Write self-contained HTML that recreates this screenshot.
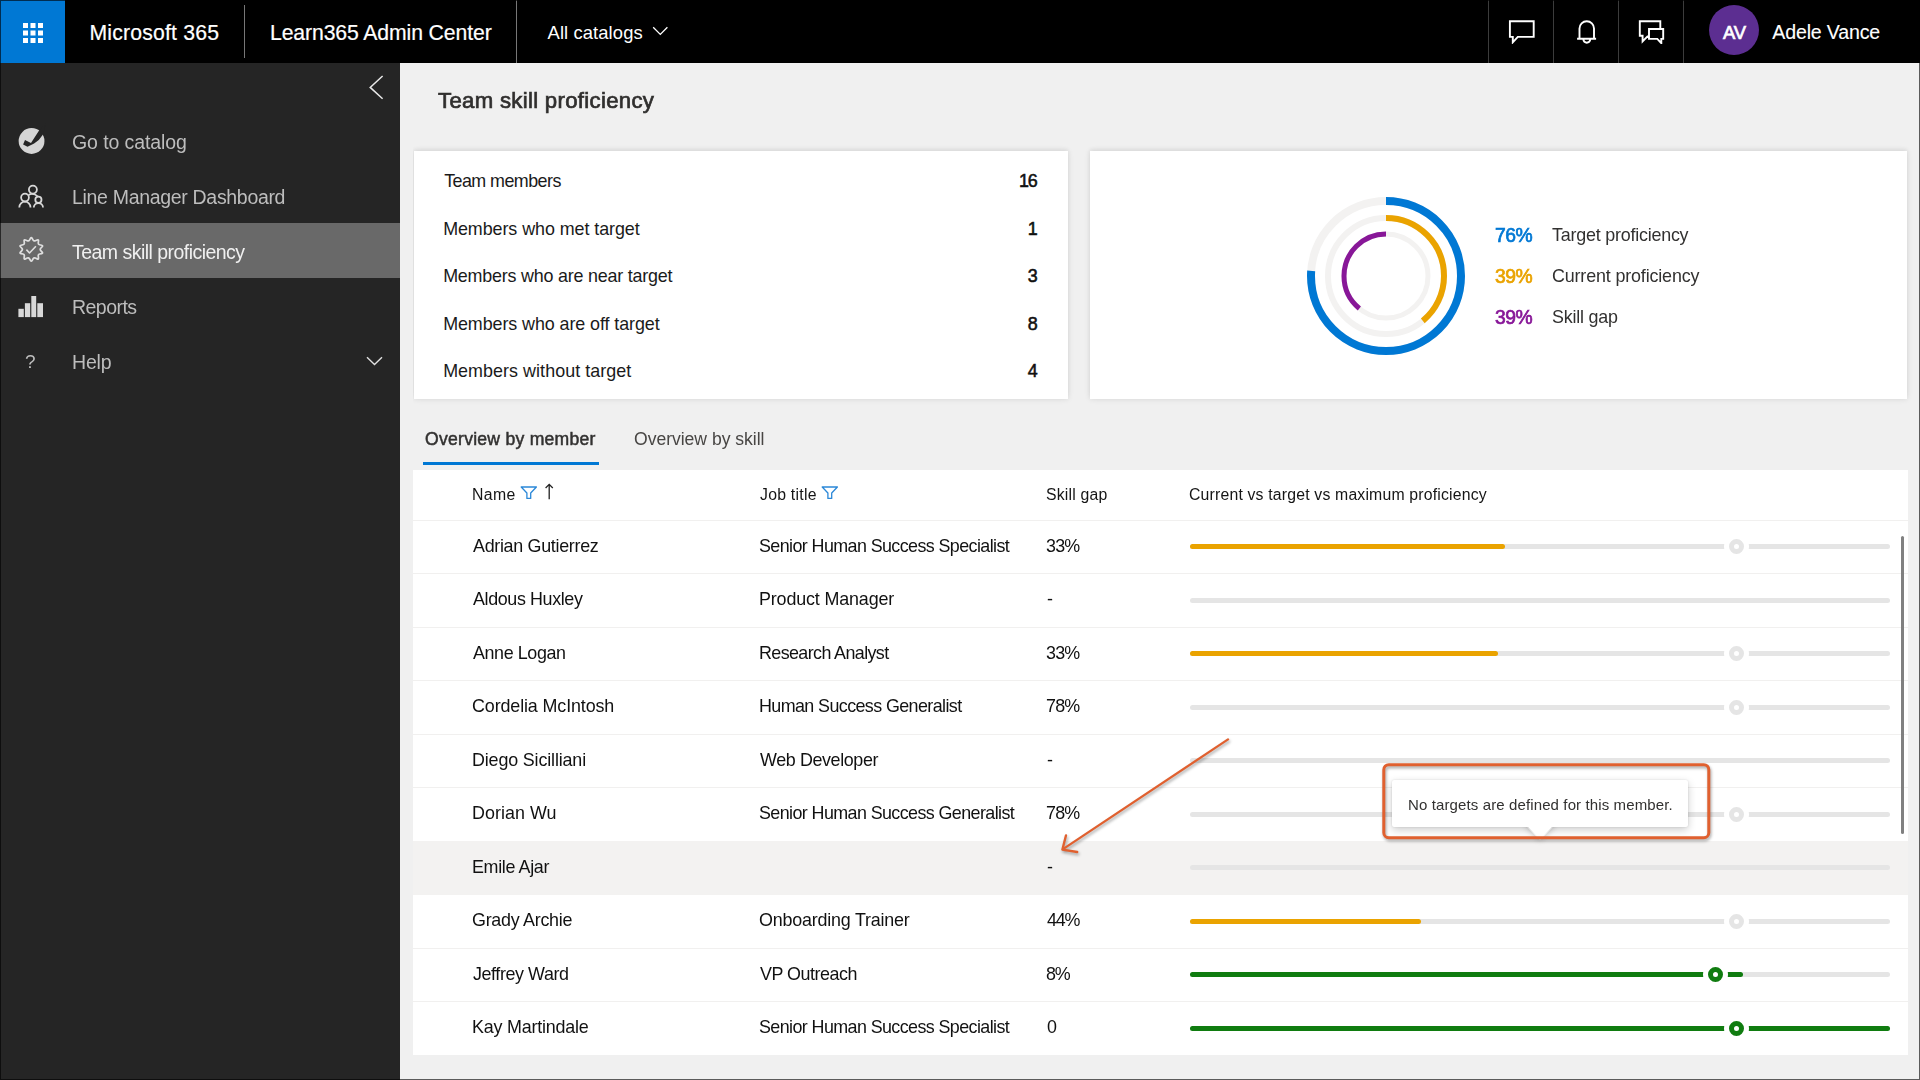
<!DOCTYPE html>
<html lang="en">
<head>
<meta charset="utf-8">
<title>Team skill proficiency</title>
<style>
*{box-sizing:border-box;margin:0;padding:0}
html,body{width:1920px;height:1080px;overflow:hidden;background:#f0f0f0;font-family:"Liberation Sans",sans-serif;}
.abs{position:absolute}
.t{position:absolute;white-space:nowrap;line-height:1;transform-origin:0 0}
#hdr{position:absolute;left:0;top:0;width:1920px;height:63px;background:#000}
#waffle{position:absolute;left:0;top:0;width:65px;height:63px;background:#0078d4}
.hsep{position:absolute;width:1px;background:#3c3c3c}
#side{position:absolute;left:0;top:63px;width:400px;height:1017px;background:#252525}
#sel{position:absolute;left:0;top:160px;width:400px;height:55px;background:#696969}
.card{position:absolute;background:#fff;box-shadow:0 0 6px rgba(0,0,0,.11),0 -2px 4px rgba(0,0,0,.04)}
#tbl{position:absolute;left:413px;top:470px;width:1495px;height:585px;background:#fff}
.rl{position:absolute;left:0;width:1495px;height:1px;background:#f1f0ef}
.bar{position:absolute;height:5px;border-radius:3px}
.g{background:#e5e5e5}
.o{background:#eaa300}
.gr{background:#107c10}
.dot{position:absolute;width:15px;height:15px;border-radius:50%;border:5px solid #e5e5e5;background:#fff;box-shadow:0 0 0 5px #fff}
.dot.gr{border-color:#107c10;background:#fff}
</style>
</head>
<body>
<!-- HEADER -->
<div id="hdr">
  <div id="waffle">
    <svg class="abs" style="left:22px;top:22px" width="22" height="22" viewBox="0 0 22 22" fill="#fff">
      <rect x="1" y="1" width="5" height="5"/><rect x="8.5" y="1" width="5" height="5"/><rect x="16" y="1" width="5" height="5"/>
      <rect x="1" y="8.5" width="5" height="5"/><rect x="8.5" y="8.5" width="5" height="5"/><rect x="16" y="8.5" width="5" height="5"/>
      <rect x="1" y="16" width="5" height="5"/><rect x="8.5" y="16" width="5" height="5"/><rect x="16" y="16" width="5" height="5"/>
    </svg>
  </div>
  <div class="hsep" style="left:244px;top:5px;height:53px;background:#777"></div>
  <div class="hsep" style="left:516px;top:0;height:63px;background:#777"></div>
  <svg class="abs" style="left:652px;top:26.4px" width="17" height="10" viewBox="0 0 17 10" fill="none" stroke="#fff" stroke-width="1.3"><path d="M1.2 1.2 L8.3 8.4 L15.4 1.2"/></svg>
  <div class="hsep" style="left:1488px;top:0;height:63px"></div>
  <div class="hsep" style="left:1553px;top:0;height:63px"></div>
  <div class="hsep" style="left:1618px;top:0;height:63px"></div>
  <div class="hsep" style="left:1683px;top:0;height:63px"></div>
  <svg class="abs" style="left:1508px;top:19px" width="28" height="25" viewBox="0 0 28 25" fill="none" stroke="#fff" stroke-width="1.9"><path d="M1.9 2.2 H25.7 V17.9 H9.8 L4.8 23.3 V17.9 H1.9 Z"/></svg>
  <svg class="abs" style="left:1576px;top:19px" width="21" height="25" viewBox="0 0 21 25" fill="none" stroke="#fff" stroke-width="1.9"><path d="M1.1 19.7 H20.1 M3.5 19.5 V9.5 A7.25 7.25 0 0 1 18 9.5 V19.5 M7.4 20.6 A3.4 3.1 0 0 0 14.2 20.6"/></svg>
  <svg class="abs" style="left:1638px;top:19px" width="28" height="25" viewBox="0 0 28 25" fill="none" stroke="#fff" stroke-width="1.9"><path d="M22.3 9.4 V2.2 H1.8 V16.7 H4.6 V22.4 L10 16.9 M11 10 H25.2 V19.9 H23.3 V24.2 L19.3 19.9 H11 Z"/></svg>
  <div class="abs" style="left:1709px;top:5px;width:50px;height:50px;border-radius:50%;background:#5c2e91"></div>
</div>

<!-- SIDEBAR -->
<div id="side">
  <div id="sel"></div>
  <svg class="abs" style="left:367px;top:11px" width="18" height="28" viewBox="0 0 18 28" fill="none" stroke="#e8e8e8" stroke-width="1.5"><path d="M15.6 2 L3.2 13.4 L15.6 24.8"/></svg>
  <svg class="abs" style="left:366px;top:293px" width="17" height="10" viewBox="0 0 17 10" fill="none" stroke="#e0e0e0" stroke-width="1.4"><path d="M1 1.2 L8.5 8.5 L16 1.2"/></svg>
</div>
<!-- sidebar icons (page coords) -->
<svg class="abs" style="left:0;top:120px" width="60" height="210" viewBox="0 120 60 210">
  <circle cx="31.55" cy="141" r="12.9" fill="#d5d5d5"/>
  <path d="M25 140 L31 142.9 L38.9 130.8 L46 123 L42.8 134.7 Q39.6 140.2 34.1 143.4 L27.5 146.8 L23.1 144.5 Z" fill="#252525"/>
  <g fill="none" stroke="#d8d8d8" stroke-width="1.8">
    <circle cx="32.9" cy="189.6" r="4"/>
    <circle cx="25" cy="197.6" r="3.9"/>
    <circle cx="38.4" cy="199.8" r="3.1"/>
    <path d="M19.3 207.4 A5.6 5.7 0 0 1 30.5 207.4"/>
    <path d="M33.8 207.4 A4.6 4.4 0 0 1 43 207.4"/>
    <path d="M28.6 195 Q33 192.2 38 196.6"/>
  </g>
  <g fill="none" stroke="#dedede" stroke-width="1.7" stroke-linejoin="round">
    <path d="M30.52 238.25 Q31.30 236.90 32.08 238.25 L33.12 240.06 Q33.90 241.41 35.32 240.77 L37.22 239.92 Q38.65 239.29 38.48 240.84 L38.26 242.91 Q38.10 244.46 39.62 244.79 L41.66 245.21 Q43.19 245.54 42.14 246.70 L40.75 248.24 Q39.70 249.40 40.75 250.56 L42.14 252.10 Q43.19 253.26 41.66 253.59 L39.62 254.01 Q38.10 254.34 38.26 255.89 L38.48 257.96 Q38.65 259.51 37.22 258.88 L35.32 258.03 Q33.90 257.39 33.12 258.74 L32.08 260.55 Q31.30 261.90 30.52 260.55 L29.48 258.74 Q28.70 257.39 27.28 258.03 L25.38 258.88 Q23.95 259.51 24.12 257.96 L24.34 255.89 Q24.50 254.34 22.98 254.01 L20.94 253.59 Q19.41 253.26 20.46 252.10 L21.85 250.56 Q22.90 249.40 21.85 248.24 L20.46 246.70 Q19.41 245.54 20.94 245.21 L22.98 244.79 Q24.50 244.46 24.34 242.91 L24.12 240.84 Q23.95 239.29 25.38 239.92 L27.28 240.77 Q28.70 241.41 29.48 240.06 Z"/>
    <path d="M26.4 249.6 L29.5 253 L35.9 246.3" stroke-width="1.6"/>
  </g>
  <g fill="#d8d8d8">
    <rect x="18.4" y="308.8" width="5.4" height="8.3"/>
    <rect x="24.9" y="303.2" width="5.3" height="13.9"/>
    <rect x="31.3" y="296" width="4.9" height="21.1"/>
    <rect x="37.3" y="303.2" width="5.7" height="13.9"/>
  </g>
</svg>

<!-- MAIN -->
<div class="abs" style="left:413px;top:130px;width:1507px;height:290px;overflow:hidden">
<div class="card" style="left:1px;top:21px;width:654px;height:248px"></div>
<div class="card" style="left:677px;top:21px;width:817px;height:248px"></div>
</div>
<svg class="abs" style="left:1296.45px;top:186px" width="180" height="180" viewBox="-90 -90 180 180" fill="none">
  <circle r="75" stroke="#f3f2f1" stroke-width="8"/>
  <circle r="58" stroke="#f3f2f1" stroke-width="6"/>
  <circle r="42" stroke="#f3f2f1" stroke-width="5"/>
  <circle r="75" stroke="#0078d4" stroke-width="8" stroke-dasharray="358.1 1000" transform="rotate(-90)"/>
  <circle r="58" stroke="#eaa300" stroke-width="6" stroke-dasharray="142.1 1000" transform="rotate(-90)"/>
  <circle r="42" stroke="#881798" stroke-width="5" stroke-dasharray="102.9 1000" transform="rotate(-90) scale(1,-1)"/>
</svg>

<!-- tabs -->
<div class="abs" style="left:423px;top:462px;width:176px;height:3px;background:#0078d4"></div>

<div id="tbl">
<div class="rl" style="top:50px"></div>
<div class="rl" style="top:103px"></div>
<div class="rl" style="top:157px"></div>
<div class="rl" style="top:210px"></div>
<div class="rl" style="top:264px"></div>
<div class="rl" style="top:317px"></div>
<div class="rl" style="top:371px"></div>
<div class="rl" style="top:424px"></div>
<div class="rl" style="top:478px"></div>
<div class="rl" style="top:531px"></div>
<div class="abs" style="left:0;top:371px;width:1495px;height:54px;background:#f3f2f1"></div>
<div class="bar g" style="left:777px;top:74.0px;width:700px"></div><div class="bar o" style="left:777px;top:74.0px;width:315.0px"></div><div class="dot" style="left:1316.0px;top:69.0px"></div>
<div class="bar g" style="left:777px;top:128.0px;width:700px"></div>
<div class="bar g" style="left:777px;top:181.0px;width:700px"></div><div class="bar o" style="left:777px;top:181.0px;width:308.0px"></div><div class="dot" style="left:1316.0px;top:176.0px"></div>
<div class="bar g" style="left:777px;top:235.0px;width:700px"></div><div class="dot" style="left:1316.0px;top:230.0px"></div>
<div class="bar g" style="left:777px;top:288.0px;width:700px"></div>
<div class="bar g" style="left:777px;top:342.0px;width:700px"></div><div class="dot" style="left:1316.0px;top:337.0px"></div>
<div class="bar g" style="left:777px;top:395.0px;width:700px"></div>
<div class="bar g" style="left:777px;top:449.0px;width:700px"></div><div class="bar o" style="left:777px;top:449.0px;width:230.5px"></div><div class="dot" style="left:1316.0px;top:444.0px"></div>
<div class="bar g" style="left:777px;top:502.0px;width:700px"></div><div class="bar gr" style="left:777px;top:502.0px;width:553.0px"></div><div class="dot gr" style="left:1295.1px;top:497.0px"></div>
<div class="bar g" style="left:777px;top:556.0px;width:700px"></div><div class="bar gr" style="left:777px;top:556.0px;width:700.0px"></div><div class="dot gr" style="left:1316.0px;top:551.0px"></div>

</div>
<!-- filter icons + sort arrow -->
<svg class="abs" style="left:520px;top:483.4px" width="36" height="18" viewBox="0 0 36 18" fill="none">
  <path d="M1.2 4 H16.4 L10.7 10 V15.4 H6.9 V10 Z" stroke="#2b88d8" stroke-width="1.3" stroke-linejoin="round"/>
  <path d="M29.2 16.2 V1.6 M25.6 5 L29.2 1.4 L32.8 5" stroke="#222" stroke-width="1.3"/>
</svg>
<svg class="abs" style="left:820.6px;top:483.4px" width="18" height="18" viewBox="0 0 18 18" fill="none">
  <path d="M1.2 4 H16.4 L10.7 10 V15.4 H6.9 V10 Z" stroke="#2b88d8" stroke-width="1.3" stroke-linejoin="round"/>
</svg>
<!-- scrollbar -->
<div class="abs" style="left:1901px;top:536px;width:3px;height:298px;border-radius:2px;background:#808080"></div>

<!-- tooltip -->
<div class="abs" style="left:1529.6px;top:816px;width:20px;height:20px;background:#fff;transform:rotate(45deg);box-shadow:0 0 6px rgba(0,0,0,.25)"></div>
<div class="abs" style="left:1392px;top:780px;width:296px;height:46.5px;background:#fff;border-radius:2px;box-shadow:0 3px 8px rgba(0,0,0,.2),0 0 2px rgba(0,0,0,.12)"></div>
<div class="abs" style="left:1529.6px;top:815px;width:20px;height:20px;background:#fff;transform:rotate(45deg);clip-path:polygon(100% 0,100% 100%,0 100%)"></div>
<!-- annotation -->
<svg class="abs" style="left:1040px;top:720px" width="700" height="140" viewBox="1040 720 700 140" fill="none" stroke="#e0602f">
  <g style="filter:drop-shadow(1.5px 2px 1.5px rgba(0,0,0,.35))">
  <rect x="1383.8" y="764.7" width="325" height="73" rx="5" stroke-width="3"/>
  <path d="M1228 739.4 L1062.6 849.4 M1066 835.4 L1062.4 849.6 L1077.2 852" stroke-width="2.3" stroke-linecap="round" stroke-linejoin="round"/>
  </g>
</svg>

<div class="t" style="left:89.38px;top:22.00px;color:#fff;font-size:21.2px;-webkit-text-stroke:0.2px currentColor;letter-spacing:0.212px;">Microsoft 365</div>
<div class="t" style="left:269.98px;top:22.00px;color:#fff;font-size:21.2px;-webkit-text-stroke:0.2px currentColor;letter-spacing:-0.104px;">Learn365 Admin Center</div>
<div class="t" style="left:547.54px;top:24.00px;color:#fff;font-size:18.4px;letter-spacing:0.098px;">All catalogs</div>
<div class="t" style="left:1723.03px;top:24.00px;color:#fff;font-size:18.4px;-webkit-text-stroke:0.7px currentColor;letter-spacing:-0.194px;">AV</div>
<div class="t" style="left:1772.35px;top:23.00px;color:#fff;font-size:19.6px;-webkit-text-stroke:0.1px currentColor;letter-spacing:-0.185px;">Adele Vance</div>
<div class="t" style="left:71.94px;top:133.00px;color:#bdbdbd;font-size:19.5px;letter-spacing:-0.096px;will-change:transform;">Go to catalog</div>
<div class="t" style="left:71.69px;top:188.00px;color:#bdbdbd;font-size:19.5px;letter-spacing:-0.314px;will-change:transform;">Line Manager Dashboard</div>
<div class="t" style="left:72.46px;top:243.00px;color:#f0f0f0;font-size:19.5px;letter-spacing:-0.530px;will-change:transform;">Team skill proficiency</div>
<div class="t" style="left:72.09px;top:298.00px;color:#bdbdbd;font-size:19.5px;letter-spacing:-0.546px;will-change:transform;">Reports</div>
<div class="t" style="left:72.09px;top:353.00px;color:#bdbdbd;font-size:19.5px;letter-spacing:-0.156px;will-change:transform;">Help</div>
<div class="t" style="left:24.78px;top:352.00px;color:#bdbdbd;font-size:19px;will-change:transform;">?</div>
<div class="t" style="left:438.10px;top:90.00px;color:#302f2e;font-size:22.2px;-webkit-text-stroke:0.7px currentColor;letter-spacing:0.300px;will-change:transform;">Team skill proficiency</div>
<div class="t" style="left:444.18px;top:173.00px;color:#1a1a1a;font-size:17.9px;letter-spacing:-0.553px;">Team members</div>
<div class="t" style="left:443.15px;top:221.00px;color:#1a1a1a;font-size:17.9px;letter-spacing:-0.064px;">Members who met target</div>
<div class="t" style="left:443.15px;top:268.00px;color:#1a1a1a;font-size:17.9px;letter-spacing:-0.202px;">Members who are near target</div>
<div class="t" style="left:443.15px;top:316.00px;color:#1a1a1a;font-size:17.9px;letter-spacing:-0.078px;">Members who are off target</div>
<div class="t" style="left:443.15px;top:363.00px;color:#1a1a1a;font-size:17.9px;letter-spacing:0.055px;">Members without target</div>
<div class="t" style="left:1019.10px;top:173.00px;color:#111;font-size:17.9px;-webkit-text-stroke:0.55px currentColor;letter-spacing:-1.259px;">16</div>
<div class="t" style="left:1027.86px;top:221.00px;color:#111;font-size:17.9px;-webkit-text-stroke:0.55px currentColor;">1</div>
<div class="t" style="left:1027.85px;top:268.00px;color:#111;font-size:17.9px;-webkit-text-stroke:0.55px currentColor;">3</div>
<div class="t" style="left:1027.84px;top:316.00px;color:#111;font-size:17.9px;-webkit-text-stroke:0.55px currentColor;">8</div>
<div class="t" style="left:1027.72px;top:363.00px;color:#111;font-size:17.9px;-webkit-text-stroke:0.55px currentColor;">4</div>
<div class="t" style="left:1494.70px;top:226.00px;color:#0078d4;font-size:19.3px;-webkit-text-stroke:0.7px currentColor;letter-spacing:-0.503px;will-change:transform;">76%</div>
<div class="t" style="left:1494.78px;top:267.00px;color:#eaa300;font-size:19.3px;-webkit-text-stroke:0.7px currentColor;letter-spacing:-0.445px;will-change:transform;">39%</div>
<div class="t" style="left:1494.78px;top:308.00px;color:#881798;font-size:19.3px;-webkit-text-stroke:0.7px currentColor;letter-spacing:-0.445px;will-change:transform;">39%</div>
<div class="t" style="left:1552.18px;top:227.00px;color:#323130;font-size:17.9px;letter-spacing:-0.214px;will-change:transform;">Target proficiency</div>
<div class="t" style="left:1551.55px;top:268.00px;color:#323130;font-size:17.9px;letter-spacing:-0.151px;will-change:transform;">Current proficiency</div>
<div class="t" style="left:1551.51px;top:309.00px;color:#323130;font-size:17.9px;letter-spacing:-0.194px;will-change:transform;">Skill gap</div>
<div class="t" style="left:425.40px;top:431.00px;color:#323130;font-size:17.6px;-webkit-text-stroke:0.5px currentColor;letter-spacing:0.250px;will-change:transform;">Overview by member</div>
<div class="t" style="left:633.56px;top:431.00px;color:#484644;font-size:17.6px;letter-spacing:-0.035px;will-change:transform;">Overview by skill</div>
<div class="t" style="left:472.22px;top:487.00px;color:#151515;font-size:15.8px;letter-spacing:0.361px;will-change:transform;">Name</div>
<div class="t" style="left:759.68px;top:487.00px;color:#151515;font-size:15.8px;letter-spacing:0.252px;will-change:transform;">Job title</div>
<div class="t" style="left:1045.74px;top:487.00px;color:#151515;font-size:15.8px;letter-spacing:0.188px;will-change:transform;">Skill gap</div>
<div class="t" style="left:1189.16px;top:487.00px;color:#151515;font-size:15.8px;letter-spacing:0.182px;will-change:transform;">Current vs target vs maximum proficiency</div>
<div class="t" style="left:472.84px;top:538.00px;color:#111;font-size:17.9px;letter-spacing:-0.302px;will-change:transform;">Adrian Gutierrez</div>
<div class="t" style="left:759.01px;top:538.00px;color:#111;font-size:17.9px;letter-spacing:-0.590px;will-change:transform;">Senior Human Success Specialist</div>
<div class="t" style="left:1045.96px;top:538.00px;color:#111;font-size:17.9px;letter-spacing:-0.816px;will-change:transform;">33%</div>
<div class="t" style="left:472.84px;top:591.00px;color:#111;font-size:17.9px;letter-spacing:-0.376px;will-change:transform;">Aldous Huxley</div>
<div class="t" style="left:758.85px;top:591.00px;color:#111;font-size:17.9px;letter-spacing:-0.145px;will-change:transform;">Product Manager</div>
<div class="t" style="left:1046.58px;top:591.00px;color:#111;font-size:17.9px;will-change:transform;">-</div>
<div class="t" style="left:472.84px;top:645.00px;color:#111;font-size:17.9px;letter-spacing:-0.393px;will-change:transform;">Anne Logan</div>
<div class="t" style="left:758.85px;top:645.00px;color:#111;font-size:17.9px;letter-spacing:-0.604px;will-change:transform;">Research Analyst</div>
<div class="t" style="left:1045.96px;top:645.00px;color:#111;font-size:17.9px;letter-spacing:-0.816px;will-change:transform;">33%</div>
<div class="t" style="left:471.95px;top:698.00px;color:#111;font-size:17.9px;letter-spacing:-0.120px;will-change:transform;">Cordelia McIntosh</div>
<div class="t" style="left:758.85px;top:698.00px;color:#111;font-size:17.9px;letter-spacing:-0.593px;will-change:transform;">Human Success Generalist</div>
<div class="t" style="left:1045.95px;top:698.00px;color:#111;font-size:17.9px;letter-spacing:-0.811px;will-change:transform;">78%</div>
<div class="t" style="left:471.75px;top:752.00px;color:#111;font-size:17.9px;letter-spacing:-0.148px;will-change:transform;">Diego Sicilliani</div>
<div class="t" style="left:759.96px;top:752.00px;color:#111;font-size:17.9px;letter-spacing:-0.379px;will-change:transform;">Web Developer</div>
<div class="t" style="left:1046.58px;top:752.00px;color:#111;font-size:17.9px;will-change:transform;">-</div>
<div class="t" style="left:471.75px;top:805.00px;color:#111;font-size:17.9px;letter-spacing:0.037px;will-change:transform;">Dorian Wu</div>
<div class="t" style="left:759.01px;top:805.00px;color:#111;font-size:17.9px;letter-spacing:-0.590px;will-change:transform;">Senior Human Success Generalist</div>
<div class="t" style="left:1045.95px;top:805.00px;color:#111;font-size:17.9px;letter-spacing:-0.811px;will-change:transform;">78%</div>
<div class="t" style="left:471.75px;top:859.00px;color:#111;font-size:17.9px;letter-spacing:-0.350px;will-change:transform;">Emile Ajar</div>
<div class="t" style="left:1046.58px;top:859.00px;color:#111;font-size:17.9px;will-change:transform;">-</div>
<div class="t" style="left:471.95px;top:912.00px;color:#111;font-size:17.9px;letter-spacing:-0.277px;will-change:transform;">Grady Archie</div>
<div class="t" style="left:759.06px;top:912.00px;color:#111;font-size:17.9px;letter-spacing:-0.205px;will-change:transform;">Onboarding Trainer</div>
<div class="t" style="left:1046.78px;top:912.00px;color:#111;font-size:17.9px;letter-spacing:-1.222px;will-change:transform;">44%</div>
<div class="t" style="left:472.74px;top:966.00px;color:#111;font-size:17.9px;letter-spacing:-0.402px;will-change:transform;">Jeffrey Ward</div>
<div class="t" style="left:759.94px;top:966.00px;color:#111;font-size:17.9px;letter-spacing:-0.465px;will-change:transform;">VP Outreach</div>
<div class="t" style="left:1045.98px;top:966.00px;color:#111;font-size:17.9px;letter-spacing:-1.143px;will-change:transform;">8%</div>
<div class="t" style="left:471.75px;top:1019.00px;color:#111;font-size:17.9px;letter-spacing:-0.200px;will-change:transform;">Kay Martindale</div>
<div class="t" style="left:759.01px;top:1019.00px;color:#111;font-size:17.9px;letter-spacing:-0.590px;will-change:transform;">Senior Human Success Specialist</div>
<div class="t" style="left:1046.64px;top:1019.00px;color:#111;font-size:17.9px;will-change:transform;">0</div>
<div class="t" style="left:1408.45px;top:797.00px;color:#323130;font-size:15.0px;letter-spacing:0.120px;will-change:transform;">No targets are defined for this member.</div>
<div class="abs" style="left:0;top:0;width:1920px;height:1080px;border:1px solid rgba(0,0,0,.62);pointer-events:none"></div>
</body>
</html>
